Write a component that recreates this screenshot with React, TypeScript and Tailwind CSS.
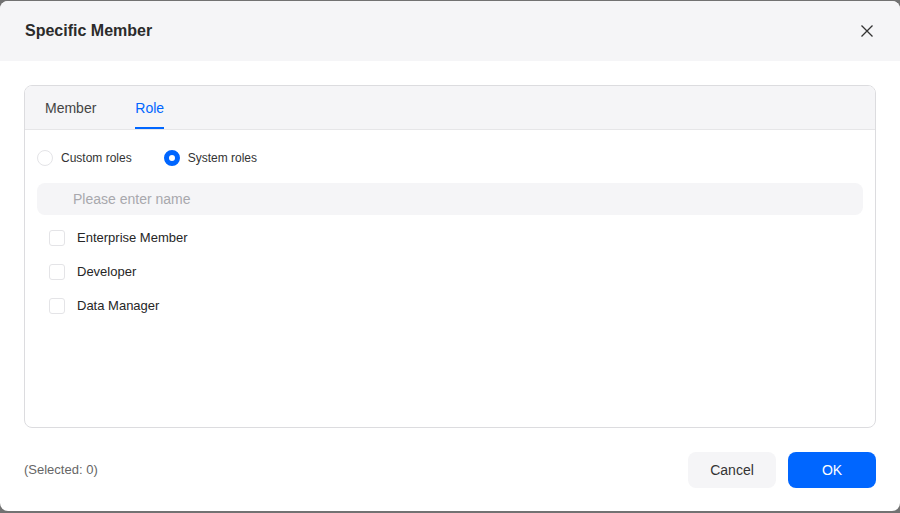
import { useState } from 'react'

const roles = ['Enterprise Member', 'Developer', 'Data Manager']

export default function App() {
  const [tab, setTab] = useState('role')
  const [kind, setKind] = useState('system')
  const [checked, setChecked] = useState<string[]>([])

  const toggle = (r: string) =>
    setChecked((c) => (c.includes(r) ? c.filter((x) => x !== r) : [...c, r]))

  return (
    <div className="h-[513px] w-[900px] bg-[#727272] pt-px pb-[2px] font-['Liberation_Sans',Arial,sans-serif]">
      <div className="flex h-full w-full flex-col overflow-hidden rounded-lg bg-white">
        {/* header */}
        <div className="flex h-[60px] shrink-0 items-center justify-between bg-[#f5f5f7] pl-[25px] pr-[26px]">
          <h2 className="text-[16px] font-bold text-[#2b2b2b]">Specific Member</h2>
          <button className="text-[#333]">
            <svg width="14" height="14" viewBox="0 0 14 14" fill="none" stroke="currentColor" strokeWidth="1.3">
              <path d="M1.5 1.5l11 11M12.5 1.5l-11 11" />
            </svg>
          </button>
        </div>

        {/* body */}
        <div className="px-6 pt-6">
          <div className="flex h-[343px] flex-col overflow-hidden rounded-lg border border-[#dcdcdf]">
            <div className="flex h-[44px] shrink-0 gap-[39px] border-b border-[#e6e6e8] bg-[#f5f5f7] pl-5 text-[14px]">
              <button
                onClick={() => setTab('member')}
                className={`relative h-full pt-[2px] ${tab === 'member' ? 'text-[#0066ff]' : 'text-[#444]'}`}
              >
                Member
                {tab === 'member' && <span className="absolute bottom-0 left-0 right-0 h-[2px] bg-[#0066ff]" />}
              </button>
              <button
                onClick={() => setTab('role')}
                className={`relative h-full pt-[2px] ${tab === 'role' ? 'text-[#0066ff]' : 'text-[#444]'}`}
              >
                Role
                {tab === 'role' && <span className="absolute bottom-0 left-0 right-0 h-[2px] bg-[#0066ff]" />}
              </button>
            </div>

            <div className="px-3 pt-[19px]">
              <div className="flex items-center gap-[11px] text-[12px] text-[#333]">
                <label className="flex cursor-pointer items-center gap-2" onClick={() => setKind('custom')}>
                  <span
                    className={`h-4 w-4 rounded-full ${kind === 'custom' ? 'border-[5px] border-[#0066ff]' : 'border border-[#e4e4e7]'}`}
                  />
                  Custom roles
                </label>
                <label className="ml-[21px] flex cursor-pointer items-center gap-2" onClick={() => setKind('system')}>
                  <span
                    className={`h-4 w-4 rounded-full ${kind === 'system' ? 'border-[5px] border-[#0066ff]' : 'border border-[#e4e4e7]'}`}
                  />
                  System roles
                </label>
              </div>

              <input
                placeholder="Please enter name"
                className="mt-4 h-8 w-full rounded-lg bg-[#f5f5f7] pl-9 text-[14px] text-[#333] outline-none placeholder:text-[#a8a8ad]"
              />

              <div className="mt-[6px] flex flex-col pl-3">
                {roles.map((r) => (
                  <label key={r} className="flex h-[34px] cursor-pointer items-center gap-3 text-[13px] text-[#262626]">
                    <span
                      onClick={() => toggle(r)}
                      className={`flex h-4 w-4 items-center justify-center rounded-[3px] border ${checked.includes(r) ? 'border-[#0066ff] bg-[#0066ff]' : 'border-[#e4e4e7] bg-white'}`}
                    >
                      {checked.includes(r) && (
                        <svg width="10" height="10" viewBox="0 0 10 10" fill="none" stroke="white" strokeWidth="1.6">
                          <path d="M2 5l2 2 4-4" />
                        </svg>
                      )}
                    </span>
                    {r}
                  </label>
                ))}
              </div>
            </div>
          </div>
        </div>

        {/* footer */}
        <div className="mt-auto flex items-center justify-between px-6 pb-[23px]">
          <span className="text-[13px] text-[#666]">(Selected: {checked.length})</span>
          <div className="flex gap-3">
            <button className="h-9 w-[88px] rounded-lg bg-[#f5f5f7] text-[14px] text-[#333]">Cancel</button>
            <button className="h-9 w-[88px] rounded-lg bg-[#0066ff] text-[14px] text-white">OK</button>
          </div>
        </div>
      </div>
    </div>
  )
}
